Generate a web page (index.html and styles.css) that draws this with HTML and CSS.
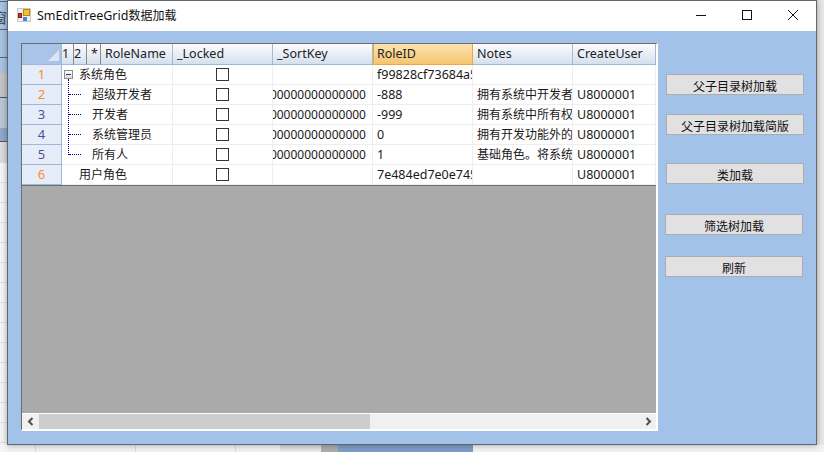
FILE: index.html
```html
<!DOCTYPE html>
<html lang="zh">
<head>
<meta charset="utf-8">
<title>SmEditTreeGrid数据加载</title>
<link rel="stylesheet" href="styles.css">
</head>
<body>
<div class="desk-left"><span class="desk-glyph">窗</span></div>
<div class="desk-bottom">
  <span class="desk-seg-a"></span><span class="desk-seg-b"></span><span class="desk-seg-c"></span>
</div>
<main class="window">
  <header class="titlebar">
    <svg class="app-icon" width="14" height="14" viewBox="0 0 14 14">
      <rect x="0" y="0" width="14" height="14" fill="#c8c8c8"/>
      <rect x="1" y="1" width="12" height="12" fill="#eeeeee"/>
      <rect x="6.5" y="1.5" width="6" height="6" fill="#f2c230" stroke="#b98a10"/>
      <rect x="1.5" y="5.5" width="3" height="4" fill="#d9342a" stroke="#8f1d16"/>
      <rect x="6" y="9" width="4" height="4" fill="#4a86d8"/>
    </svg>
    <span class="title">SmEditTreeGrid<span class="title-cjk">数据加载</span></span>
    <div class="caption">
      <svg class="cap" width="12" height="12" viewBox="0 0 12 12"><path d="M1 6.5H11" stroke="#111" fill="none"/></svg>
      <svg class="cap" width="12" height="12" viewBox="0 0 12 12"><rect x="1.5" y="1.5" width="9" height="9" stroke="#111" fill="none"/></svg>
      <svg class="cap" width="12" height="12" viewBox="0 0 12 12"><path d="M1 1L11 11M11 1L1 11" stroke="#111" fill="none"/></svg>
    </div>
  </header>
  <div class="client">
    <section class="grid-frame">
      <div class="grid-table">
        <div class="corner"><span class="corner-tri"></span></div>
        <div class="ch narrow">1</div>
        <div class="ch narrow">2</div>
        <div class="ch narrow star">*</div>
        <div class="ch">RoleName</div>
        <div class="ch">_Locked</div>
        <div class="ch">_SortKey</div>
        <div class="ch sel">RoleID</div>
        <div class="ch">Notes</div>
        <div class="ch">CreateUser</div>

        <div class="rh orange">1</div>
        <div class="c tree"><span class="expander"></span><span class="vline first"></span></div>
        <div class="c name lv0">系统角色</div>
        <div class="c center"><span class="check"></span></div>
        <div class="c"></div>
        <div class="c">f99828cf73684a5</div>
        <div class="c"></div>
        <div class="c">&nbsp;</div>

        <div class="rh orange">2</div>
        <div class="c tree"><span class="vline"></span><span class="hline"></span></div>
        <div class="c name lv1">超级开发者</div>
        <div class="c center"><span class="check"></span></div>
        <div class="c key">00000000000000000</div>
        <div class="c">-888</div>
        <div class="c cjk">拥有系统中开发者权限</div>
        <div class="c">U8000001</div>

        <div class="rh">3</div>
        <div class="c tree"><span class="vline"></span><span class="hline"></span></div>
        <div class="c name lv1">开发者</div>
        <div class="c center"><span class="check"></span></div>
        <div class="c key">00000000000000000</div>
        <div class="c">-999</div>
        <div class="c cjk">拥有系统中所有权限</div>
        <div class="c">U8000001</div>

        <div class="rh">4</div>
        <div class="c tree"><span class="vline"></span><span class="hline"></span></div>
        <div class="c name lv1">系统管理员</div>
        <div class="c center"><span class="check"></span></div>
        <div class="c key">00000000000000000</div>
        <div class="c">0</div>
        <div class="c cjk">拥有开发功能外的权限</div>
        <div class="c">U8000001</div>

        <div class="rh">5</div>
        <div class="c tree"><span class="vline last"></span><span class="hline"></span></div>
        <div class="c name lv1">所有人</div>
        <div class="c center"><span class="check"></span></div>
        <div class="c key">00000000000000000</div>
        <div class="c">1</div>
        <div class="c cjk">基础角色。将系统权限</div>
        <div class="c">U8000001</div>

        <div class="rh orange">6</div>
        <div class="c tree"></div>
        <div class="c name lv0">用户角色</div>
        <div class="c center"><span class="check"></span></div>
        <div class="c"></div>
        <div class="c">7e484ed7e0e745</div>
        <div class="c"></div>
        <div class="c">U8000001</div>
      </div>
      <div class="grid-empty"></div>
      <div class="hscroll">
        <span class="arrow">
          <svg width="8" height="9" viewBox="0 0 8 9"><path d="M5.5 1L2 4.5L5.5 8" stroke="#505050" stroke-width="2" fill="none"/></svg>
        </span>
        <span class="thumb"></span>
        <span class="arrow end">
          <svg width="8" height="9" viewBox="0 0 8 9"><path d="M2.5 1L6 4.5L2.5 8" stroke="#505050" stroke-width="2" fill="none"/></svg>
        </span>
      </div>
    </section>
    <aside class="buttons">
      <button class="btn b1">父子目录树加载</button>
      <button class="btn b2">父子目录树加载简版</button>
      <button class="btn b3">类加载</button>
      <button class="btn b4">筛选树加载</button>
      <button class="btn b5">刷新</button>
    </aside>
  </div>
</main>
</body>
</html>
```
FILE: styles.css
```css
* { box-sizing: border-box; }
html, body { margin: 0; height: 100%; }
body {
  width: 824px; height: 452px; overflow: hidden; position: relative;
  background: #e6e7e9;
  font-family: "Noto Sans", "Noto Sans CJK SC", sans-serif;
  font-size: 12px; color: #111;
}
.desk-left {
  position: absolute; left: 0; top: 0; width: 8px; height: 452px; overflow: hidden;
  background:
    linear-gradient(#a9c3e2 0 1px, #54667c 1px 2px, #a9c3e2 2px 29px, #54667c 29px 30px, #a9c3e2 30px 57px, #54667c 57px 58px, #a9c3e2 58px 73px,
      #c4c4c4 73px 97px, #555 97px 98px, #b9c7d6 98px 128px, #8fa9cc 128px 141px, #555 141px 142px, #dcdcdc 142px 162px, transparent 162px),
    repeating-linear-gradient(#f5f5f5 0 19px, #dedede 19px 20px);
  background-position: 0 0, 0 3px;
}
.desk-glyph { position: absolute; left: -7px; top: 7px; font-size: 14px; color: #345; }
.desk-bottom {
  position: absolute; left: 8px; right: 0; top: 445px; height: 7px; display: flex;
  background:
    linear-gradient(90deg, transparent 27px, #d8d8d8 27px 28px, transparent 28px 127px, #d8d8d8 127px 128px, transparent 128px 227px, #d8d8d8 227px 228px, transparent 228px),
    #f1f1f1;
}
.desk-seg-a { width: 41px; margin-left: 272px; background: linear-gradient(#d4d4d4, #ececec); }
.desk-seg-b { width: 17px; background: #ababab; }
.desk-seg-c { width: 135px; background: #7d9dc6; }
.window {
  position: absolute; left: 7px; top: 0; width: 810px; height: 445px;
  border: 1px solid #5f6770; background: #a3c2e9;
  box-shadow: 0 0 6px rgba(0,0,0,.35);
  display: flex; flex-direction: column;
}
.titlebar { height: 30px; background: #fff; display: flex; align-items: center; padding: 0 0 2px 9px; flex: none; }
.app-icon { flex: none; }
.title { margin-left: 6px; font-size: 12.5px; color: #111; white-space: nowrap; }
.title-cjk { font-size: 12px; }
.caption { margin-left: auto; display: flex; }
.cap { margin-right: 17px; margin-left: 17px; }
.client { flex: 1; display: flex; align-items: flex-start; padding: 12px 0 0 13px; }
.grid-frame {
  width: 637px; height: 388px; flex: none;
  display: flex; flex-direction: column;
  border-left: 1px solid #6d6d6d; border-top: 1px solid #6d6d6d;
  border-right: 2px solid #fff; border-bottom: 2px solid #fff;
  background: #aaaaaa;
}
.grid-table {
  display: grid;
  grid-template-columns: 40px 12px 13px 14px 72px 100px 100px 100px 100px 83px;
  grid-template-rows: 21px repeat(6, 20px);
  background: #fff; flex: none;
}
.corner { background: #a9c4e6; border-right: 1px solid #9db8d8; border-bottom: 1px solid #9db8d8; position: relative; }
.corner-tri {
  position: absolute; right: 2px; bottom: 3px; width: 0; height: 0;
  border-left: 11px solid transparent; border-bottom: 11px solid #dde6f1;
}
.ch {
  background: linear-gradient(#fbfcfe, #e6edf6 55%, #d5dfed);
  border-right: 1px solid #a4b9d4; border-bottom: 1px solid #9db8d8;
  padding-left: 4px; line-height: 20px; font-size: 12.5px; white-space: nowrap; overflow: hidden; color: #222;
}
.ch.narrow { padding-left: 0; text-align: left; border-right-color: #8a8a8a; }
.ch.star { padding-left: 4px; }
.ch.sel {
  background: linear-gradient(#fbe3ae, #f8d38c 55%, #f4c56e);
  border-right: 1px solid #f1a63c; border-bottom: 1px solid #f1a63c; border-left: 1px solid #f1a63c;
  padding-left: 3px;
}
.rh {
  background: #e6edf8; border-right: 1px solid #9db8d8; border-bottom: 1px solid #9db8d8;
  text-align: center; line-height: 19px; font-size: 13px; color: #4f4fa0;
}
.rh.orange { color: #f4922a; }
.c {
  border-right: 1px solid #eeeeee; border-bottom: 1px solid #eeeeee;
  padding-left: 4px; line-height: 19px; font-size: 12.5px; white-space: nowrap; overflow: hidden; background: #fff; color: #1a1a1a;
}
.cjk { font-size: 12px; }
.tree { position: relative; z-index: 1; border-right: none; padding: 0; overflow: visible; background: transparent; }
.name { grid-column: span 3; font-size: 12px; }
.center { display: flex; align-items: center; justify-content: center; padding: 0; }
.check { width: 13px; height: 13px; border: 1px solid #333; background: #fff; display: block; }
.key { direction: rtl; padding-right: 6px; padding-left: 0; text-align: left; font-size: 12px; }
.lv0 { padding-left: 5px; }
.lv1 { padding-left: 18px; }
.expander {
  position: absolute; left: 2px; top: 5px; width: 9px; height: 9px;
  border: 1px solid #8e8e8e; background: linear-gradient(#fff, #d8d8d8);
}
.expander::after { content: ""; position: absolute; left: 1px; right: 1px; top: 3px; height: 1px; background: #223a78; }
.vline { position: absolute; left: 6px; top: -1px; bottom: -1px; border-left: 1px dotted #00008b; }
.vline.first { top: 14px; }
.vline.last { bottom: 9px; }
.hline { position: absolute; left: 7px; top: 9px; width: 12px; border-top: 1px dotted #00008b; }
.grid-empty { flex: 1; background: #aaaaaa; border-top: 1px solid #6d6d6d; }
.hscroll { height: 16px; flex: none; background: #f0f0f0; display: flex; align-items: stretch; border-top: 1px solid #fff; }
.arrow { width: 17px; display: flex; align-items: center; justify-content: center; flex: none; }
.arrow.end { margin-left: auto; }
.thumb { width: 331px; background: #cdcdcd; }
.buttons { width: 152px; flex: none; display: flex; flex-direction: column; padding-top: 31px; }
.btn {
  width: 138px; height: 21px; padding: 3px 0 0; background: #e1e1e1;
  border: 1px solid #adadad; font: inherit; font-size: 12px; color: #111; line-height: 18px;
}
.b1 { margin-left: 8px; }
.b2 { margin-left: 8px; margin-top: 19px; }
.b3 { margin-left: 8px; margin-top: 28px; }
.b4 { margin-left: 7px; margin-top: 30px; }
.b5 { margin-left: 7px; margin-top: 21px; }
```
